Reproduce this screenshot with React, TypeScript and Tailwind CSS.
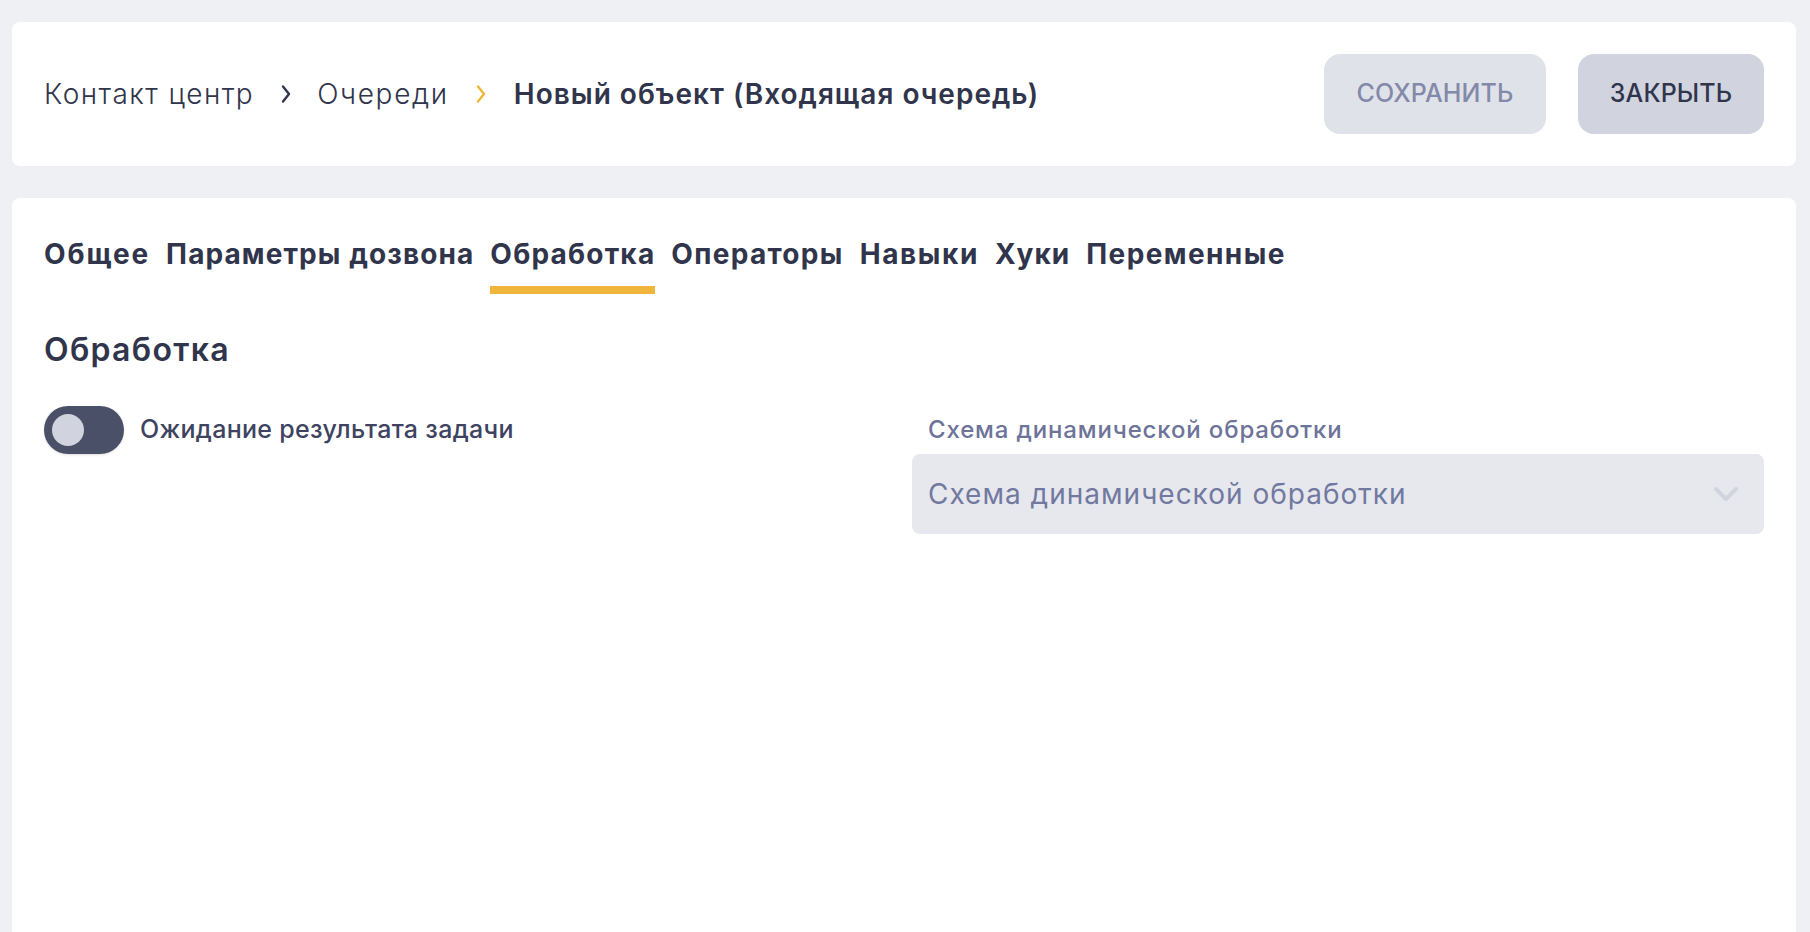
import React from "react";

function Crumb({ color }: { color: string }) {
  return (
    <svg width="12" height="20" viewBox="0 0 12 20" fill="none" className="shrink-0">
      <path d="M3 2.5l6 7.5-6 7.5" stroke={color} strokeWidth="2.4" strokeLinecap="round" strokeLinejoin="round" />
    </svg>
  );
}

const tabs = [
  { label: "Общее", spacing: "tracking-[1.9px]" },
  { label: "Параметры дозвона", spacing: "tracking-[1.1px]" },
  { label: "Обработка", spacing: "tracking-[1.2px]" },
  { label: "Операторы", spacing: "tracking-[1.3px]" },
  { label: "Навыки", spacing: "tracking-[1.6px]" },
  { label: "Хуки", spacing: "tracking-[1px]" },
  { label: "Переменные", spacing: "tracking-[1.4px]" },
];

export default function App() {
  return (
    <div className="h-screen overflow-hidden bg-[#eff0f4] pt-[22px] pl-[12px] pr-[14px] flex flex-col gap-[32px] font-['Inter'] text-[#30354c]">
      <header className="h-[144px] shrink-0 rounded-[8px] bg-white px-[32px] flex items-center justify-between">
        <nav className="flex items-center text-[28px]">
          <span className="font-light tracking-[1.45px]">Контакт центр</span>
          <span className="ml-[26px] mr-[25px]"><Crumb color="#30354c" /></span>
          <span className="font-light tracking-[1.65px]">Очереди</span>
          <span className="ml-[26px] mr-[27px]"><Crumb color="#f0b63c" /></span>
          <span className="font-semibold tracking-[1px]">Новый объект (Входящая очередь)</span>
        </nav>
        <div className="flex gap-[32px]">
          <button className="h-[80px] w-[222px] rounded-[16px] bg-[#e0e2e9] text-[#8389a8] text-[25px] font-medium tracking-[0.1px]">СОХРАНИТЬ</button>
          <button className="h-[80px] w-[186px] rounded-[16px] bg-[#d1d4df] text-[#30354c] text-[25px] font-medium tracking-[0.1px]">ЗАКРЫТЬ</button>
        </div>
      </header>
      <main className="flex-1 rounded-t-[8px] bg-white px-[32px]">
        <div className="flex gap-[16px] pt-[32px] h-[96px]">
          {tabs.map((t) => (
            <div key={t.label} className={`h-[64px] pt-[4px] text-[28px] font-bold leading-[40px] ${t.spacing} ${t.label === "Обработка" ? "border-b-[8px] border-[#f0b63c]" : ""}`}>{t.label}</div>
          ))}
        </div>
        <h2 className="mt-[32px] text-[32px] leading-[48px] font-semibold tracking-[1.3px]">Обработка</h2>
        <div className="mt-[32px] grid grid-cols-2 gap-[16px]">
          <div className="flex items-start gap-[16px]">
            <div className="h-[48px] w-[80px] rounded-full bg-[#4a5068] flex items-center pl-[8px] shadow-sm">
              <div className="h-[32px] w-[32px] rounded-full bg-[#d1d4df]" />
            </div>
            <span className="text-[25px] leading-[46px] font-medium text-[#3d4360] tracking-[0.3px]">Ожидание результата задачи</span>
          </div>
          <div>
            <div className="pl-[16px] h-[48px] text-[24px] leading-[48px] font-medium text-[#6d7399] tracking-[0.85px]">Схема динамической обработки</div>
            <div className="h-[80px] rounded-[8px] bg-[#e7e8ee] flex items-center justify-between pl-[16px] pr-[24px]">
              <span className="text-[28px] text-[#7279a0] tracking-[1px]">Схема динамической обработки</span>
              <svg width="28" height="18" viewBox="0 0 28 18" fill="none">
                <path d="M4 4l10 10L24 4" stroke="#d1d4df" strokeWidth="4" strokeLinecap="round" strokeLinejoin="round" />
              </svg>
            </div>
          </div>
        </div>
      </main>
    </div>
  );
}
